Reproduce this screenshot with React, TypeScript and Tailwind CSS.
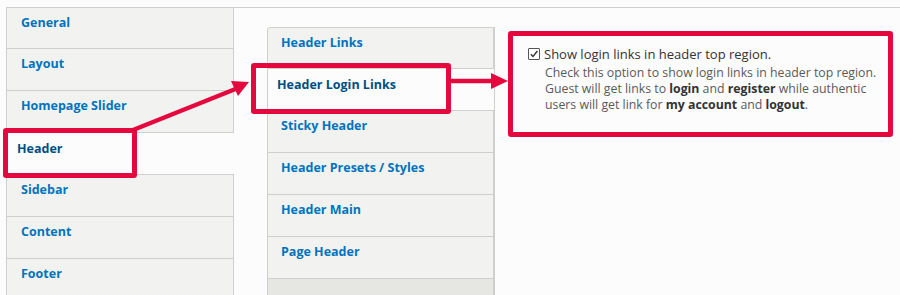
import React from "react";

const leftTabs = ["General", "Layout", "Homepage Slider", "Header", "Sidebar", "Content", "Footer"];
const midTabs = ["Header Links", "Header Login Links", "Sticky Header", "Header Presets / Styles", "Header Main", "Page Header"];

export default function App() {
  return (
    <div
      className="relative w-[900px] h-[295px] overflow-hidden bg-[#fcfcfc]"
      style={{ fontFamily: '"Open Sans", "Liberation Sans", sans-serif' }}
    >
      <div className="flex pt-[7px] pl-[6px] h-full">
        {/* left vertical tabs */}
        <div className="w-[228px] flex flex-col shrink-0">
          {leftTabs.map((t, i) => {
            const active = t === "Header";
            return (
              <div
                key={t}
                className={
                  "h-[42px] shrink-0 border-b border-l border-[#cfcfcc] text-[12.5px] font-bold leading-[16px] " +
                  (i === 0 ? "border-t " : "") +
                  (active
                    ? "bg-[#fcfcfc] text-[#004f80] pl-[10px] pt-[8px]"
                    : "bg-[#f2f2f0] border-r text-[#0074bd] pl-[14px] pt-[7px]")
                }
              >
                {t}
              </div>
            );
          })}
        </div>
        {/* outer pane */}
        <div className="flex-1 border-t border-[#cfcfcc] pt-[19px] pl-[33px] flex">
          <div className="w-[227px] shrink-0 flex flex-col">
            {midTabs.map((t, i) => {
              const active = t === "Header Login Links";
              return (
                <div
                  key={t}
                  className={
                    "h-[42px] shrink-0 border-b border-l border-[#cfcfcc] text-[12.5px] font-bold leading-[16px] " +
                    (i === 0 ? "border-t rounded-tl-[3px] " : "") +
                    (active
                      ? "bg-[#fcfcfc] text-[#004f80] pl-[9px] pt-[8px]"
                      : "bg-[#f2f2f0] border-r text-[#0074bd] pl-[13px] pt-[7px]")
                  }
                >
                  {t}
                </div>
              );
            })}
            <div className="flex-1 bg-[#e6e6e3] border-l border-r border-[#cfcfcc]" />
          </div>
          <div className="flex-1 border-l border-[#cfcfcc] pt-[4px] pl-[13px] pr-[7px]">
            <div className="h-[106px] border-[5px] border-[#e4083f] rounded-[3px] bg-[#fcfcfc] pl-[15px] pt-[11px]">
              <div className="flex items-center gap-[4px] text-[13px] leading-[14px] text-[#333]">
                <span className="w-[12px] h-[12px] border border-[#555] rounded-[1px] bg-white flex items-center justify-center">
                  <svg width="10" height="10" viewBox="0 0 10 10">
                    <path d="M1.8 5.2 L4 7.4 L8.4 2" stroke="#333" strokeWidth="1.4" fill="none" />
                  </svg>
                </span>
                <span>Show login links in header top region.</span>
              </div>
              <div className="pl-[17px] pt-[4px] text-[12.3px] leading-[16px] text-[#5a5a5a] whitespace-nowrap">
                <div>Check this option to show login links in header top region.</div>
                <div>
                  Guest will get links to <b className="text-[#333]">login</b> and <b className="text-[#333]">register</b> while authentic
                </div>
                <div>
                  users will get link for <b className="text-[#333]">my account</b> and <b className="text-[#333]">logout</b>.
                </div>
              </div>
            </div>
          </div>
        </div>
      </div>

      {/* annotation boxes */}
      <div className="absolute left-[3px] top-[128px] w-[134px] h-[50px] border-[5px] border-[#e4083f] rounded-[3px]" />
      <div className="absolute left-[251px] top-[63px] w-[200px] h-[51px] border-[5px] border-[#e4083f] rounded-[3px]" />

      {/* arrows */}
      <svg className="absolute left-0 top-0 pointer-events-none" width="900" height="295">
        <line x1="133" y1="130" x2="238" y2="88" stroke="#e4083f" strokeWidth="4.5" />
        <polygon points="249,82 231,81 238,96" fill="#e4083f" />
        <line x1="449" y1="81" x2="493" y2="81" stroke="#e4083f" strokeWidth="4.5" />
        <polygon points="508,81 491,73 491,89" fill="#e4083f" />
      </svg>
    </div>
  );
}
